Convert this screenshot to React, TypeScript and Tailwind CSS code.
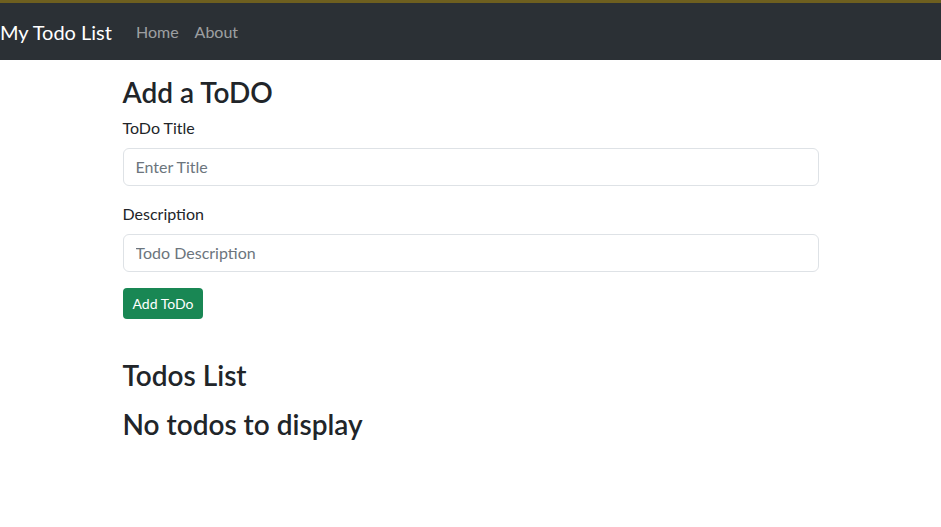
import React from "react";

export default function App() {
  return (
    <div className="min-h-[527px] bg-white text-[#212529]" style={{ fontFamily: 'Lato, "Noto Sans", sans-serif' }}>
      <nav className="h-[60px] bg-[#2b3035] border-t-[3px] border-[#6e5f1f] flex items-center">
        <span className="text-[20px] text-white mr-[24px] leading-[30px]">My Todo List</span>
        <a className="text-[16px] text-[rgba(255,255,255,0.55)] mr-[16px]">Home</a>
        <a className="text-[16px] text-[rgba(255,255,255,0.55)]">About</a>
      </nav>
      <div className="w-[696px] mx-auto">
        <h3 className="mt-[16px] mb-[6px] text-[28px] font-semibold leading-[1.2]">Add a ToDO</h3>
        <div className="mb-4">
          <label className="block mb-2 text-[16px] leading-6">ToDo Title</label>
          <input
            className="block w-full h-[38px] px-3 text-[16px] border border-[#dee2e6] rounded-[6px] placeholder:text-[#6c757d] outline-none"
            placeholder="Enter Title"
          />
        </div>
        <div className="mb-4">
          <label className="block mb-2 text-[16px] leading-6">Description</label>
          <input
            className="block w-full h-[38px] px-3 text-[16px] border border-[#dee2e6] rounded-[6px] placeholder:text-[#6c757d] outline-none"
            placeholder="Todo Description"
          />
        </div>
        <button className="h-[31px] px-[10px] text-[14px] text-white bg-[#198754] rounded-[4px]">Add ToDo</button>
        <h3 className="mt-[40px] mb-4 text-[28px] font-semibold leading-[1.2]">Todos List</h3>
        <h3 className="text-[28px] font-semibold leading-[1.2]">No todos to display</h3>
      </div>
    </div>
  );
}
